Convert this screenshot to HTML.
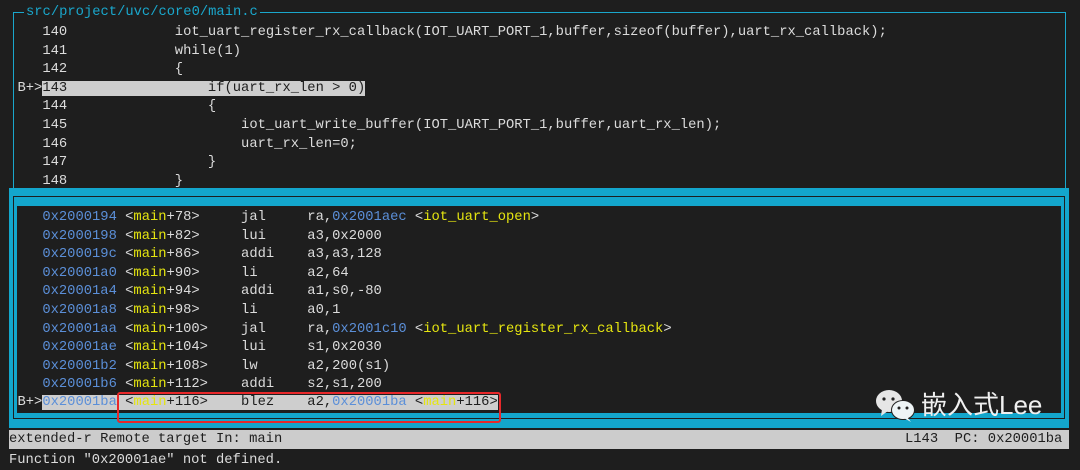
<!DOCTYPE html>
<html><head><meta charset="utf-8"><style>
body{margin:0;width:1080px;height:458px;background:#1e1e1e;overflow:hidden;position:relative;font-family:"Liberation Mono",monospace;font-size:13.8px;color:#dcdcdc}
.a{position:absolute}
.row{position:absolute;left:17.5px;white-space:pre;height:18.6px;line-height:18.6px}
.b{color:#5b8fd8}.y{color:#e5e510}
.hl{background:#cecece;color:#1e1e1e}
</style></head><body>
<div class="a" style="left:13px;top:12px;width:1051px;height:180px;border:1px solid #1aa7cc;border-bottom:none"></div>
<div class="a" style="left:24px;top:3px;background:#1e1e1e;color:#1aa7cc;padding:0 2px;line-height:20px;white-space:pre">src/project/uvc/core0/main.c</div>
<div class="row" style="top:24px">   140             iot_uart_register_rx_callback(IOT_UART_PORT_1,buffer,sizeof(buffer),uart_rx_callback);</div>
<div class="row" style="top:42.6px">   141             while(1)</div>
<div class="row" style="top:61.2px">   142             {</div>
<div class="row" style="top:79.8px">B+><span class="hl">143                 if(uart_rx_len &gt; 0)</span></div>
<div class="row" style="top:98.4px">   144                 {</div>
<div class="row" style="top:117px">   145                     iot_uart_write_buffer(IOT_UART_PORT_1,buffer,uart_rx_len);</div>
<div class="row" style="top:135.6px">   146                     uart_rx_len=0;</div>
<div class="row" style="top:154.2px">   147                 }</div>
<div class="row" style="top:172.8px">   148             }</div>

<div class="a" style="left:9px;top:188px;width:1060px;height:240px;background:#13a6cc"></div>
<div class="a" style="left:13px;top:196px;width:1050px;height:221px;border:1px solid #1e1e1e"></div>
<div class="a" style="left:17px;top:206px;width:1044px;height:207px;background:#1e1e1e"></div>

<div class="row" style="top:209px">   <span class="b">0x2000194</span> &lt;<span class="y">main</span>+78&gt;     jal     ra,<span class="b">0x2001aec</span> &lt;<span class="y">iot_uart_open</span>&gt;</div>
<div class="row" style="top:227.6px">   <span class="b">0x2000198</span> &lt;<span class="y">main</span>+82&gt;     lui     a3,0x2000</div>
<div class="row" style="top:246.2px">   <span class="b">0x200019c</span> &lt;<span class="y">main</span>+86&gt;     addi    a3,a3,128</div>
<div class="row" style="top:264.8px">   <span class="b">0x20001a0</span> &lt;<span class="y">main</span>+90&gt;     li      a2,64</div>
<div class="row" style="top:283.4px">   <span class="b">0x20001a4</span> &lt;<span class="y">main</span>+94&gt;     addi    a1,s0,-80</div>
<div class="row" style="top:302px">   <span class="b">0x20001a8</span> &lt;<span class="y">main</span>+98&gt;     li      a0,1</div>
<div class="row" style="top:320.6px">   <span class="b">0x20001aa</span> &lt;<span class="y">main</span>+100&gt;    jal     ra,<span class="b">0x2001c10</span> &lt;<span class="y">iot_uart_register_rx_callback</span>&gt;</div>
<div class="row" style="top:339.2px">   <span class="b">0x20001ae</span> &lt;<span class="y">main</span>+104&gt;    lui     s1,0x2030</div>
<div class="row" style="top:357.8px">   <span class="b">0x20001b2</span> &lt;<span class="y">main</span>+108&gt;    lw      a2,200(s1)</div>
<div class="row" style="top:376.4px">   <span class="b">0x20001b6</span> &lt;<span class="y">main</span>+112&gt;    addi    s2,s1,200</div>
<div class="row" style="top:394px">B+><span class="hl"><span class="b">0x20001ba</span> &lt;<span class="y">main</span>+116&gt;    blez    a2,<span class="b">0x20001ba</span> &lt;<span class="y">main</span>+116&gt;</span></div>
<div class="a" style="left:117px;top:392px;width:380px;height:27px;border:2px solid #e8282a;border-radius:3px"></div>

<div class="a" style="left:873px;top:388px;width:180px;height:34px">
<svg width="46" height="34" viewBox="0 0 46 34" style="position:absolute;left:0;top:0">
<ellipse cx="16" cy="13" rx="13" ry="11" fill="#e6e6e6"/><path d="M9 21 L8 28 L15 23Z" fill="#e6e6e6"/>
<circle cx="11" cy="11" r="1.6" fill="#222"/><circle cx="20" cy="11" r="1.6" fill="#222"/>
<ellipse cx="30" cy="22" rx="12" ry="10" fill="#1e1e1e"/>
<ellipse cx="30" cy="22" rx="11" ry="9" fill="#eef4f6"/><path d="M34 29 L38 34 L31 30Z" fill="#eef4f6"/>
<circle cx="26" cy="20" r="1.5" fill="#222"/><circle cx="34" cy="20" r="1.5" fill="#222"/>
</svg>
<div class="a" style="left:48px;top:2px;font-family:'Liberation Sans','Noto Sans CJK SC',sans-serif;font-size:26px;color:#f0f0f0;white-space:nowrap;line-height:30px">嵌入式Lee</div>
</div>

<div class="a" style="left:9px;top:430px;width:1060px;height:19px;background:#cccccc"></div>
<div class="row" style="top:430px;left:9px;color:#1e1e1e;line-height:19px">extended-r Remote target In: main</div>
<div class="row" style="top:430px;left:905px;color:#1e1e1e;line-height:19px">L143  PC: 0x20001ba</div>
<div class="row" style="top:451px;left:9px;line-height:19px">Function "0x20001ae" not defined.</div>
</body></html>
